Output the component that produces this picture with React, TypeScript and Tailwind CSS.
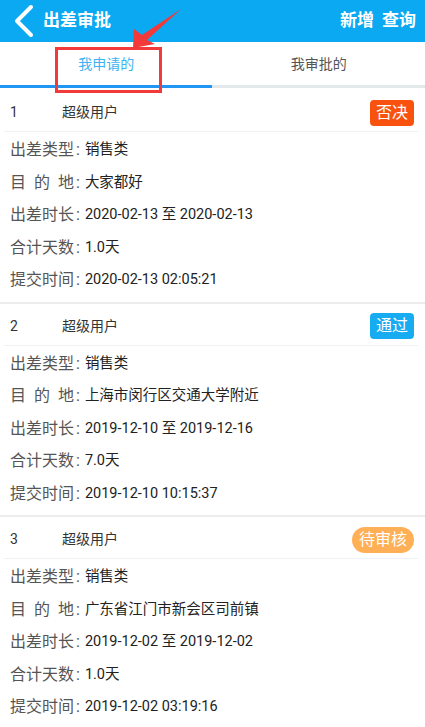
import React from "react";

type Item = {
  no: number;
  status: "否决" | "通过" | "待审核";
  type: string;
  dest: string;
  from: string;
  to: string;
  days: string;
  submit: string;
};

const items: Item[] = [
  { no: 1, status: "否决", type: "销售类", dest: "大家都好", from: "2020-02-13", to: "2020-02-13", days: "1.0天", submit: "2020-02-13 02:05:21" },
  { no: 2, status: "通过", type: "销售类", dest: "上海市闵行区交通大学附近", from: "2019-12-10", to: "2019-12-16", days: "7.0天", submit: "2019-12-10 10:15:37" },
  { no: 3, status: "待审核", type: "销售类", dest: "广东省江门市新会区司前镇", from: "2019-12-02", to: "2019-12-02", days: "1.0天", submit: "2019-12-02 03:19:16" },
];

const FONT = { fontFamily: "Roboto, 'Noto Sans CJK SC', sans-serif" };

function Badge({ status }: { status: Item["status"] }) {
  if (status === "否决")
    return <div className="h-[26px] px-[6px] flex items-center rounded-[4px] bg-[#f9520f] text-white text-[16px]">否决</div>;
  if (status === "通过")
    return <div className="h-[26px] px-[6px] flex items-center rounded-[4px] bg-[#17abf1] text-white text-[16px]">通过</div>;
  return <div className="h-[26px] px-[7px] flex items-center rounded-full bg-[#ffb057] text-white text-[16px]">待审核</div>;
}

function Line({ label, value }: { label: React.ReactNode; value: string }) {
  return (
    <div className="h-[32.5px] flex items-center pl-[10px]">
      <div className="w-[64px] text-[16px] text-[#555] flex">{label}</div>
      <span className="text-[16px] text-[#555] ml-[2px]">:</span>
      <span className="text-[14.5px] text-[#222] ml-[5px]">{value}</span>
    </div>
  );
}

function Card({ item, first }: { item: Item; first: boolean }) {
  return (
    <div className={first ? "border-t-2 border-white" : "border-t-2 border-[#ececec]"}>
      <div className="h-[41px] flex items-center pl-[10px] pr-[11px] pt-[4px]">
        <span className="w-[52px] text-[14px] text-[#333]">{item.no}</span>
        <span className="text-[14px] text-[#333]">超级用户</span>
        <div className="ml-auto">
          <Badge status={item.status} />
        </div>
      </div>
      <div className="h-px bg-[#eef2f2] ml-[4px] mr-[7px]" />
      <div className="pt-[2px] pb-[5px]">
        <Line label="出差类型" value={item.type} />
        <Line
          label={
            <div className="w-full flex justify-between">
              <span>目</span>
              <span>的</span>
              <span>地</span>
            </div>
          }
          value={item.dest}
        />
        <Line label="出差时长" value={`${item.from} 至 ${item.to}`} />
        <Line label="合计天数" value={item.days} />
        <Line label="提交时间" value={item.submit} />
      </div>
    </div>
  );
}

export default function App() {
  return (
    <div className="relative w-[425px] min-h-[727px] bg-white overflow-hidden" style={FONT}>
      {/* Header */}
      <div className="h-[42px] bg-[#0aa9f1] flex items-center">
        <svg width="22" height="34" viewBox="0 0 22 34" className="ml-[13px]">
          <path d="M18 3 L4 17 L18 31" fill="none" stroke="white" strokeWidth="4" strokeLinecap="round" strokeLinejoin="round" />
        </svg>
        <span className="ml-[8px] text-white text-[17px] font-bold">出差审批</span>
        <div className="ml-auto mr-[9px] flex gap-[8px] text-white text-[17px] font-bold">
          <span>新增</span>
          <span>查询</span>
        </div>
      </div>

      {/* Tabs */}
      <div className="h-[46px] flex flex-col">
        <div className="flex-1 flex pt-[2px]">
          <div className="flex-1 flex items-center justify-center text-[14px] text-[#3cb3f2]">我申请的</div>
          <div className="flex-1 flex items-center justify-center text-[14px] text-[#555]">我审批的</div>
        </div>
        <div className="h-[3px] flex">
          <div className="w-[212px] bg-[#2196f3]" />
          <div className="flex-1 bg-[#e3e8e8]" />
        </div>
      </div>

      {/* List */}
      <div>
        {items.map((it, i) => (
          <Card key={it.no} item={it} first={i === 0} />
        ))}
      </div>

      {/* Annotation: red box */}
      <div className="absolute left-[55px] top-[47px] w-[107px] h-[46px] border-[3px] border-[#f23a3a]" />
      {/* Annotation: arrow */}
      <svg className="absolute left-0 top-0" width="425" height="100" viewBox="0 0 425 100">
        <polygon points="133,48 134,29 142,35 181,9 147,40 155,44" fill="#f23a3a" />
      </svg>
    </div>
  );
}
